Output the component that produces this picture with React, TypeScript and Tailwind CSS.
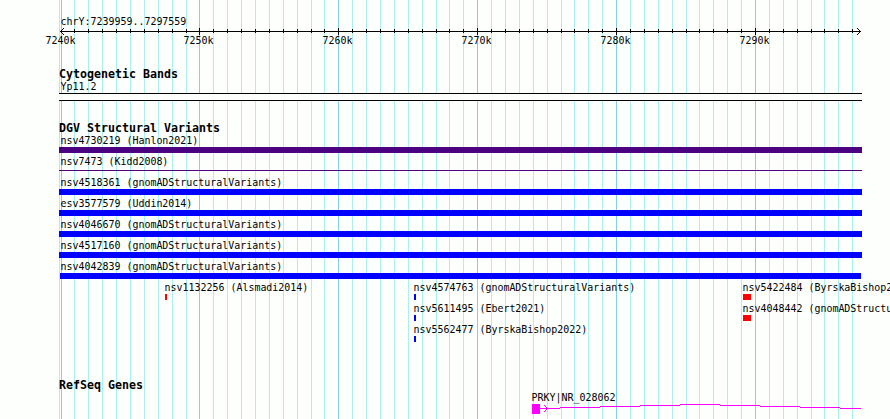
import React from "react";

const MAJOR = [61, 199, 338, 477, 616, 755];
const MINOR = [
  74, 88, 102, 116, 130, 144, 158, 172, 186, 213, 227, 241, 255, 269, 283, 297, 311, 324,
  352, 366, 380, 394, 408, 422, 436, 449, 463, 491, 505, 519, 533, 547, 561, 574, 588, 602,
  630, 644, 658, 672, 686, 699, 713, 727, 741, 769, 783, 797, 811, 824, 838, 852,
];

function Grid() {
  return (
    <svg className="absolute inset-0" width="890" height="419" shapeRendering="crispEdges">
      {[59, ...MINOR].map((x) => (
        <rect key={x} x={x} y="0" width="1" height="419" fill="#afeeee" />
      ))}
      {MAJOR.map((x) => (
        <rect key={x} x={x} y="0" width="1" height="419" fill="#87ceeb" />
      ))}
    </svg>
  );
}

function Ruler() {
  return (
    <svg className="block h-[9px] w-full" viewBox="0 0 890 9" shapeRendering="crispEdges">
      <rect x="60" y="4" width="801" height="1" />
      {MINOR.map((x) => (
        <rect key={x} x={x} y="2" width="1" height="4" />
      ))}
      {MAJOR.slice(1).map((x) => (
        <rect key={x} x={x} y="1" width="1" height="7" />
      ))}
      {[1, 2, 3].map((d) => (
        <g key={d}>
          <rect x={60 + d} y={4 - d} width="1" height="1" />
          <rect x={60 + d} y={4 + d} width="1" height="1" />
          <rect x={860 - d} y={4 - d} width="1" height="1" />
          <rect x={860 - d} y={4 + d} width="1" height="1" />
        </g>
      ))}
    </svg>
  );
}

function Heading({ children }: { children: string }) {
  return (
    <h2 className="ml-[59px] h-3 text-[11.63px] font-bold leading-3">{children}</h2>
  );
}

function Track({ label, bar }: { label: string; bar: string }) {
  return (
    <div className="h-[21px]">
      <div className="ml-[60.5px] h-[13px] leading-[13px]">{label}</div>
      <div className={bar} />
    </div>
  );
}

const BLUE = "ml-[59px] w-[803px] h-1.5 bg-[#0000ff]";

function Variant({ label, bar }: { label: string; bar: string }) {
  return (
    <div className="h-[21px]">
      <div className="-ml-[0.5px] h-[13px] leading-[13px]">{label}</div>
      <div className={bar} />
    </div>
  );
}

const GENE = [
  [540, 20, 38], [560, 40, 37], [600, 40, 36], [640, 40, 35], [680, 40, 34],
  [720, 40, 35], [760, 40, 36], [800, 40, 37], [840, 21, 38],
];

export default function App() {
  return (
    <main className="relative h-[419px] w-[890px] overflow-hidden whitespace-pre bg-[#fdfffc] font-['DejaVu_Sans_Mono',monospace] text-[9.966px] text-black">
      <Grid />
      <div className="relative flex flex-col">
        <div className="ml-[60.5px] mt-4 h-[11px] leading-3">chrY:7239959..7297559</div>
        <Ruler />
        <div className="ml-[45.5px] flex h-[11px] leading-[9px]">
          <span className="w-[138px]">7240k</span>
          <span className="w-[139px]">7250k</span>
          <span className="w-[139px]">7260k</span>
          <span className="w-[139px]">7270k</span>
          <span className="w-[139px]">7280k</span>
          <span>7290k</span>
        </div>

        <section className="mt-[21px]">
          <Heading>Cytogenetic Bands</Heading>
          <div className="ml-[60.5px] h-[13px] leading-[13px]">Yp11.2</div>
          <div className="ml-[59px] h-2 w-[803px] border-y border-black bg-[#fdfffc]" />
        </section>

        <section className="mt-[21px]">
          <Heading>DGV Structural Variants</Heading>
          <Track label="nsv4730219 (Hanlon2021)" bar="ml-[59px] w-[803px] h-1.5 bg-[#4b0082]" />
          <Track label="nsv7473 (Kidd2008)" bar="ml-[59px] mt-[2px] w-[803px] h-px bg-[#4b0082]" />
          <Track label="nsv4518361 (gnomADStructuralVariants)" bar={BLUE} />
          <Track label="esv3577579 (Uddin2014)" bar={BLUE} />
          <Track label="nsv4046670 (gnomADStructuralVariants)" bar={BLUE} />
          <Track label="nsv4517160 (gnomADStructuralVariants)" bar={BLUE} />
          <Track label="nsv4042839 (gnomADStructuralVariants)" bar="ml-[60px] w-[801px] h-1.5 bg-[#0000ff]" />
          <div className="ml-[165px] flex h-[63px]">
            <div className="w-[249px] shrink-0">
              <Variant label="nsv1132256 (Alsmadi2014)" bar="h-1.5 w-0.5 bg-[#ff0000]" />
            </div>
            <div className="w-[329px] shrink-0">
              <Variant label="nsv4574763 (gnomADStructuralVariants)" bar="h-1.5 w-0.5 bg-[#0000ff]" />
              <Variant label="nsv5611495 (Ebert2021)" bar="h-1.5 w-0.5 bg-[#0000ff]" />
              <Variant label="nsv5562477 (ByrskaBishop2022)" bar="h-1.5 w-0.5 bg-[#0000ff]" />
            </div>
            <div className="shrink-0">
              <Variant label="nsv5422484 (ByrskaBishop2022)" bar="h-1.5 w-2 bg-[#ff0000]" />
              <Variant label="nsv4048442 (gnomADStructuralVariants)" bar="h-1.5 w-2 bg-[#ff0000]" />
            </div>
          </div>
        </section>

        <section className="mt-[35px]">
          <Heading>RefSeq Genes</Heading>
          <div className="ml-[531.5px] h-[13px] leading-[13px]">PRKY|NR_028062</div>
          <svg className="block h-3 w-full" viewBox="0 34 890 12" shapeRendering="crispEdges" fill="#ff00ff">
            <rect x="532" y="34" width="8" height="10" />
            {GENE.map(([x, w, y]) => (
              <rect key={x} x={x} y={y} width={w} height="1" />
            ))}
            {[1, 2, 3].map((d) => (
              <g key={d}>
                <rect x={547 - d} y={38 - d} width="1" height="1" />
                <rect x={547 - d} y={38 + d} width="1" height="1" />
              </g>
            ))}
          </svg>
        </section>
      </div>
    </main>
  );
}
